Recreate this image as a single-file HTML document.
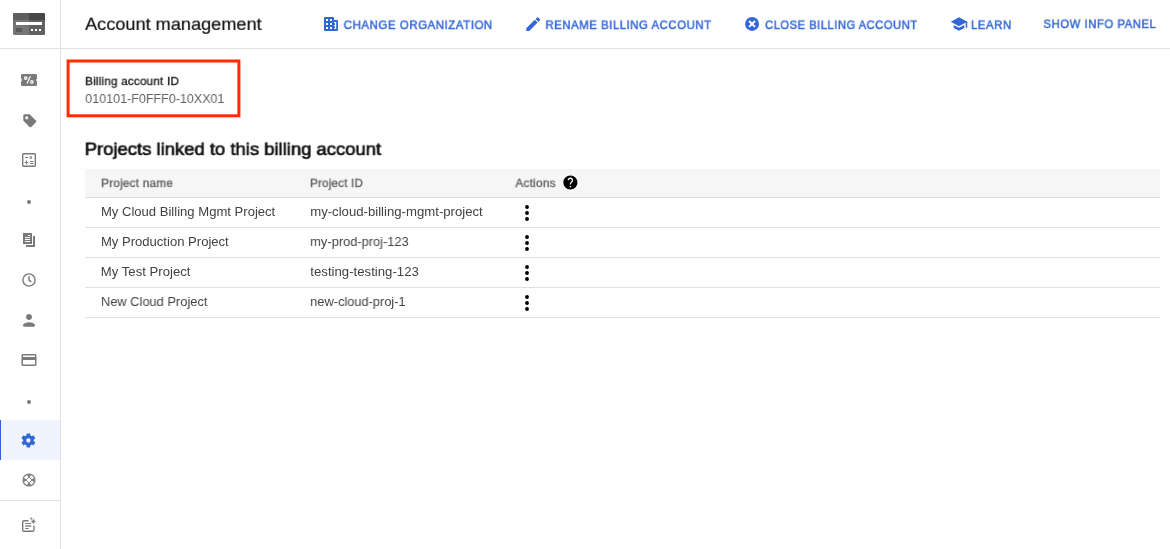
<!DOCTYPE html>
<html>
<head>
<meta charset="utf-8">
<title>Account management</title>
<style>
html,body{margin:0;padding:0;background:#fff;}
body{width:1170px;height:549px;position:relative;overflow:hidden;font-family:"Liberation Sans",sans-serif;}
.abs{position:absolute;}
.t{position:absolute;white-space:nowrap;line-height:1;transform-origin:0 0;will-change:transform;}
.blue{color:#3367d6;}
svg{position:absolute;overflow:visible;}
.hl{position:absolute;height:1px;background:#e0e0e0;}
</style>
</head>
<body>
<!-- sidebar -->
<div class="abs" style="left:60px;top:0;width:1px;height:549px;background:#e0e0e0;"></div>
<div class="hl" style="left:0;top:48px;width:1170px;"></div>
<div class="hl" style="left:0;top:500px;width:60px;"></div>
<div class="abs" style="left:0;top:420px;width:60px;height:40px;background:#f0f4fe;"></div>
<div class="abs" style="left:0;top:420px;width:1px;height:40px;background:#2f60d8;"></div>

<!-- billing logo -->
<svg id="ic-logo" style="left:13px;top:13px;" width="32" height="22" viewBox="0 0 32 22">
  <rect x="0" y="0" width="32" height="22" rx="1.500" fill="#757575"/>
  <path d="M16 0H30.500A1.500 1.500 0 0 1 32 1.500V20.500A1.500 1.500 0 0 1 30.500 22H16Z" fill="#616161"/>
  <path d="M0 7V1.500A1.500 1.500 0 0 1 1.500 0H16V7Z" fill="#5e5e5e"/>
  <path d="M16 0H30.500A1.500 1.500 0 0 1 32 1.500V7H16Z" fill="#474747"/>
  <rect x="3" y="9" width="26" height="3" fill="#fff"/>
  <rect x="3" y="15" width="6" height="4" fill="#5a5a5a"/>
  <rect x="18" y="16" width="2" height="2" fill="#fff"/>
  <rect x="22" y="16" width="2" height="2" fill="#fff"/>
  <rect x="26" y="16" width="2" height="2" fill="#fff"/>
</svg>

<!-- SIDEBAR ICONS -->
<svg id="ic-ticket" style="left:21px;top:74px;" width="16" height="12" viewBox="0 0 16 12">
  <path d="M1.200 0H14.800A1.200 1.200 0 0 1 16 1.200V5A1 1 0 0 0 16 7V10.800A1.200 1.200 0 0 1 14.800 12H1.200A1.200 1.200 0 0 1 0 10.800V7A1 1 0 0 0 0 5V1.200A1.200 1.200 0 0 1 1.200 0Z" fill="#7a7a7a"/>
  <circle cx="4.750" cy="4.100" r="1.250" fill="none" stroke="#fff" stroke-width="1.200"/>
  <circle cx="10.850" cy="7.950" r="1.250" fill="none" stroke="#fff" stroke-width="1.200"/>
  <path d="M9.350 2.300L6.050 9.500" stroke="#fff" stroke-width="1.200" fill="none"/>
</svg>
<svg id="ic-tag" style="left:21.700px;top:112.500px;" width="15.600" height="15.600" viewBox="0 0 24 24">
  <path fill="#7a7a7a" d="M21.410 11.580l-9-9C12.050 2.220 11.550 2 11 2H4c-1.100 0-2 .9-2 2v7c0 .550.220 1.050.590 1.420l9 9c.360.360.860.580 1.410.580.550 0 1.050-.220 1.410-.590l7-7c.370-.360.590-.860.590-1.410 0-.550-.230-1.060-.590-1.420zM7.300 9.900C5.970 9.900 4.900 8.830 4.900 7.500S5.970 5.100 7.300 5.100 9.700 6.170 9.700 7.500 8.630 9.900 7.300 9.900z"/>
</svg>
<svg id="ic-calc" style="left:22px;top:153px;" width="14" height="14" viewBox="0 0 14 14">
  <rect x="0.700" y="0.700" width="12.600" height="12.600" rx="0.700" fill="none" stroke="#7a7a7a" stroke-width="1.400"/>
  <path d="M3 4.500H6M7.700 3.400L9.900 5.600M9.900 3.400L7.700 5.600M2.600 9.500H6.400M4.500 7.600V11.400M8 8.500H11.200M8 10.500H11.200" stroke="#7a7a7a" stroke-width="1.050" fill="none"/>
</svg>
<svg id="ic-dot1" style="left:27px;top:200px;" width="4" height="4" viewBox="0 0 4 4"><circle cx="2" cy="2" r="2" fill="#7a7a7a"/></svg>
<svg id="ic-docs" style="left:23px;top:233px;" width="12" height="14" viewBox="0 0 12 14">
  <rect x="0" y="0" width="9" height="11" fill="#7a7a7a"/>
  <path d="M10 3H12V14H3V12H10Z" fill="#7a7a7a"/>
  <rect x="5" y="2" width="2" height="1" fill="#fff"/>
  <rect x="2" y="4" width="5" height="1" fill="#fff"/>
  <rect x="2" y="6" width="5" height="1" fill="#fff"/>
  <rect x="2" y="8" width="5" height="1" fill="#fff"/>
</svg>
<svg id="ic-clock" style="left:21px;top:272px;" width="16" height="16" viewBox="0 0 16 16">
  <circle cx="8" cy="8" r="6.100" fill="none" stroke="#7a7a7a" stroke-width="1.400"/>
  <path d="M8 4.300V8.100L10.300 9.900" fill="none" stroke="#7a7a7a" stroke-width="1.500"/>
</svg>
<svg id="ic-person" style="left:20px;top:311px;" width="18" height="18" viewBox="0 0 24 24">
  <path fill="#7a7a7a" d="M12 12c2.210 0 4-1.790 4-4s-1.790-4-4-4-4 1.790-4 4 1.790 4 4 4z"/>
  <path fill="#7a7a7a" transform="translate(0 1)" d="M12 14c-2.670 0-8 1.340-8 4v0.400c0 .880.720 1.600 1.600 1.600h12.800c.880 0 1.600-.720 1.600-1.600V18c0-2.660-5.330-4-8-4z"/>
</svg>
<svg id="ic-card" style="left:20px;top:351px;" width="18" height="18" viewBox="0 0 24 24">
  <path fill="#7a7a7a" d="M20 4H4c-1.110 0-1.990.89-1.990 2L2 18c0 1.110.89 2 2 2h16c1.110 0 2-.89 2-2V6c0-1.110-.89-2-2-2zm0 14H4v-6h16v6zm0-10H4V6h16v2z"/>
</svg>
<svg id="ic-dot2" style="left:27px;top:400px;" width="4" height="4" viewBox="0 0 4 4"><circle cx="2" cy="2" r="2" fill="#7a7a7a"/></svg>
<svg id="ic-gear" style="left:20.200px;top:431.500px;" width="16.800" height="16.800" viewBox="0 0 24 24">
  <path fill="#3367d6" d="M19.430 12.980c.04-.32.070-.64.070-.98s-.03-.66-.07-.98l2.110-1.650c.19-.15.24-.42.120-.64l-2-3.460c-.12-.22-.39-.3-.61-.22l-2.490 1c-.52-.4-1.080-.73-1.690-.98l-.38-2.650C14.460 2.180 14.250 2 14 2h-4c-.25 0-.46.180-.49.420l-.38 2.650c-.61.250-1.170.59-1.690.98l-2.490-1c-.23-.09-.49 0-.61.220l-2 3.460c-.13.220-.07.490.12.640l2.110 1.650c-.04.320-.07.650-.07.980s.03.660.07.980l-2.110 1.650c-.19.150-.24.420-.12.640l2 3.460c.12.220.39.300.61.220l2.490-1c.52.400 1.080.730 1.690.980l.38 2.650c.03.240.24.420.49.420h4c.25 0 .46-.18.490-.42l.38-2.650c.61-.25 1.170-.59 1.690-.98l2.490 1c.23.090.49 0 .61-.22l2-3.460c.12-.22.070-.49-.12-.64l-2.110-1.650zM12 15c-1.660 0-3-1.340-3-3s1.340-3 3-3 3 1.340 3 3-1.340 3-3 3z"/>
</svg>
<svg id="ic-ring" style="left:22px;top:473px;" width="14" height="14" viewBox="-7 -7 14 14">
  <circle cx="0" cy="0" r="6" fill="none" stroke="#7a7a7a" stroke-width="1.100"/>
  <path d="M0 -3L3 0L0 3L-3 0Z" fill="none" stroke="#7a7a7a" stroke-width="0.900"/>
  <path d="M-0.500 -2.700H0.500L2.500 -5.800H-2.500Z M-0.500 2.700H0.500L2.500 5.800H-2.500Z M-2.700 -0.500V0.500L-5.800 2.500V-2.500Z M2.700 -0.500V0.500L5.800 2.500V-2.500Z" fill="#7a7a7a"/>
</svg>
<svg id="ic-note" style="left:21px;top:516px;" width="16" height="18" viewBox="0 0 16 18">
  <path d="M7.500 4.700H3A1.300 1.300 0 0 0 1.700 6V14A1.300 1.300 0 0 0 3 15.300H11.600A1.300 1.300 0 0 0 12.900 14V9.500" fill="none" stroke="#7a7a7a" stroke-width="1.400"/>
  <path d="M4.200 7.500H10.200M4.200 12.500H7.700" stroke="#7a7a7a" stroke-width="1.050" fill="none"/><path d="M4.200 10H10.200" stroke="#7a7a7a" stroke-width="1.350" fill="none"/>
  <path d="M12.400 2.800L13.150 4.650L15 5.400L13.150 6.150L12.400 8L11.650 6.150L9.800 5.400L11.650 4.650Z" fill="#7a7a7a" stroke="#7a7a7a" stroke-width="0.300"/>
  <path d="M10.200 1.200L10.600 2.200L11.600 2.600L10.600 3L10.200 4L9.800 3L8.800 2.600L9.800 2.200Z" fill="#7a7a7a" stroke="#7a7a7a" stroke-width="0.200"/>
</svg>
<!-- /SIDEBAR ICONS -->
<!-- red highlight box -->
<svg id="redbox" style="left:0;top:0;" width="300" height="130" viewBox="0 0 300 130"><rect x="68.100" y="61" width="170.800" height="54.800" fill="none" stroke="#ff2d00" stroke-width="3"/></svg>
<!-- table -->
<div class="abs" style="left:85px;top:169px;width:1075px;height:28px;background:#f6f6f6;"></div>
<div class="hl" style="left:85px;top:197px;width:1075px;"></div>
<div class="hl" style="left:85px;top:227px;width:1075px;"></div>
<div class="hl" style="left:85px;top:257px;width:1075px;"></div>
<div class="hl" style="left:85px;top:287px;width:1075px;"></div>
<div class="hl" style="left:85px;top:317px;width:1075px;"></div>
<!-- TOOLBAR ICONS -->
<svg id="ic-domain" style="left:324px;top:17px;" width="14" height="14" viewBox="0 0 14 14">
  <path d="M1 0H9A1 1 0 0 1 10 1V3H13A1 1 0 0 1 14 4V13A1 1 0 0 1 13 14H1A1 1 0 0 1 0 13V1A1 1 0 0 1 1 0Z" fill="#3367d6"/>
  <rect x="2" y="2" width="2" height="2" fill="#fff"/><rect x="6" y="2" width="2" height="2" fill="#fff"/>
  <rect x="2" y="6" width="2" height="2" fill="#fff"/><rect x="6" y="6" width="2" height="2" fill="#fff"/>
  <rect x="2" y="10" width="2" height="2" fill="#fff"/><rect x="6" y="10" width="2" height="2" fill="#fff"/>
  <path d="M10 5H12.200V12H10V11.200H11V9.200H10V8H11V6H10Z" fill="#fff"/>
</svg>
<svg id="ic-edit" style="left:523.600px;top:14.800px;" width="18.400" height="18.400" viewBox="0 0 24 24">
  <path fill="#3367d6" d="M3 17.250V21h3.750L17.810 9.940l-3.750-3.750L3 17.250zM20.710 7.040c.39-.39.39-1.020 0-1.410l-2.340-2.340c-.39-.39-1.020-.39-1.410 0l-1.830 1.830 3.750 3.750 1.830-1.830z"/>
</svg>
<svg id="ic-cancel" style="left:744px;top:16px;" width="16" height="16" viewBox="-8 -8 16 16">
  <circle cx="0.050" cy="-0.100" r="7" fill="#3367d6"/>
  <path d="M-2.900 -3.050L3 2.850M3 -3.050L-2.900 2.850" stroke="#fff" stroke-width="2" fill="none"/>
</svg>
<svg id="ic-school" style="left:949.950px;top:14.900px;" width="18" height="18" viewBox="0 0 24 24">
  <path fill="#3367d6" d="M5 13.180v4L12 21l7-3.820v-4L12 17l-7-3.820zM12 3L1 9l11 6 9-4.910V17h2V9L12 3z"/>
</svg>
<!-- help icon -->
<svg id="ic-help" style="left:562.100px;top:173.950px;" width="16.800" height="16.800" viewBox="0 0 24 24">
  <path fill="#000" d="M12 2C6.480 2 2 6.480 2 12s4.480 10 10 10 10-4.480 10-10S17.520 2 12 2zm1 17h-2v-2h2v2zm2.070-7.750l-.9.920C13.450 12.900 13 13.500 13 15h-2v-.5c0-1.100.45-2.100 1.170-2.830l1.240-1.260c.37-.36.590-.86.590-1.410 0-1.100-.9-2-2-2s-2 .9-2 2H8c0-2.210 1.790-4 4-4s4 1.790 4 4c0 .88-.36 1.680-.93 2.250z"/>
</svg>
<!-- more_vert -->
<svg id="ic-more1" style="left:525px;top:205px;" width="4" height="16" viewBox="0 0 4 16"><circle cx="2" cy="2" r="1.950" fill="#000"/><circle cx="2" cy="8" r="1.950" fill="#000"/><circle cx="2" cy="14" r="1.950" fill="#000"/></svg>
<svg id="ic-more2" style="left:525px;top:235px;" width="4" height="16" viewBox="0 0 4 16"><circle cx="2" cy="2" r="1.950" fill="#000"/><circle cx="2" cy="8" r="1.950" fill="#000"/><circle cx="2" cy="14" r="1.950" fill="#000"/></svg>
<svg id="ic-more3" style="left:525px;top:265px;" width="4" height="16" viewBox="0 0 4 16"><circle cx="2" cy="2" r="1.950" fill="#000"/><circle cx="2" cy="8" r="1.950" fill="#000"/><circle cx="2" cy="14" r="1.950" fill="#000"/></svg>
<svg id="ic-more4" style="left:525px;top:295px;" width="4" height="16" viewBox="0 0 4 16"><circle cx="2" cy="2" r="1.950" fill="#000"/><circle cx="2" cy="8" r="1.950" fill="#000"/><circle cx="2" cy="14" r="1.950" fill="#000"/></svg>
<!-- /TOOLBAR ICONS -->
<!-- TEXT -->
<div class="t" style="left:85px;top:15px;font-size:18px;font-weight:400;color:#111;transform-origin:0 15.24px;transform:translate(0.10px,0) scale(1.0082,0.95);-webkit-text-stroke:0.2px #111;">Account management</div>
<div class="t" style="left:343px;top:18px;font-size:13px;font-weight:400;color:#3367d6;transform-origin:0 11.00px;transform:translate(0.66px,0) scale(0.8843,0.94);-webkit-text-stroke:0.5px #3367d6;letter-spacing:0.6px;">CHANGE ORGANIZATION</div>
<div class="t" style="left:545px;top:18px;font-size:13px;font-weight:400;color:#3367d6;transform-origin:0 11.00px;transform:translate(0.41px,0) scale(0.8766,0.94);-webkit-text-stroke:0.5px #3367d6;letter-spacing:0.6px;">RENAME BILLING ACCOUNT</div>
<div class="t" style="left:765px;top:18px;font-size:13px;font-weight:400;color:#3367d6;transform-origin:0 11.00px;transform:translate(0.08px,0) scale(0.8602,0.94);-webkit-text-stroke:0.5px #3367d6;letter-spacing:0.6px;">CLOSE BILLING ACCOUNT</div>
<div class="t" style="left:970px;top:18px;font-size:13px;font-weight:400;color:#3367d6;transform-origin:0 11.00px;transform:translate(0.90px,0) scale(0.8839,0.94);-webkit-text-stroke:0.5px #3367d6;letter-spacing:0.6px;">LEARN</div>
<div class="t" style="left:1043px;top:17px;font-size:13px;font-weight:400;color:#3367d6;transform-origin:0 11.00px;transform:translate(0.45px,0) scale(0.8731,0.94);-webkit-text-stroke:0.5px #3367d6;letter-spacing:0.6px;">SHOW INFO PANEL</div>
<div class="t" style="left:85px;top:75px;font-size:12px;font-weight:400;color:#212121;transform-origin:0 10.16px;transform:translate(0.07px,0) scale(0.9757,0.9);-webkit-text-stroke:0.35px #212121;letter-spacing:0.2px;">Billing account ID</div>
<div class="t" style="left:85px;top:92px;font-size:13px;font-weight:400;color:#616161;transform:translate(0.21px,0) scale(0.9632,1);">010101-F0FFF0-10XX01</div>
<div class="t" style="left:84px;top:140px;font-size:18px;font-weight:400;color:#111;transform-origin:0 15.24px;transform:translate(0.66px,0) scale(1.0253,0.955);-webkit-text-stroke:0.7px #111;">Projects linked to this billing account</div>
<div class="t" style="left:101px;top:177px;font-size:12px;font-weight:400;color:#666;transform-origin:0 10.16px;transform:translate(0.07px,0) scale(0.9767,0.92);-webkit-text-stroke:0.4px #666;letter-spacing:0.25px;">Project name</div>
<div class="t" style="left:309px;top:177px;font-size:12px;font-weight:400;color:#666;transform-origin:0 10.16px;transform:translate(0.99px,0) scale(0.9623,0.92);-webkit-text-stroke:0.4px #666;letter-spacing:0.25px;">Project ID</div>
<div class="t" style="left:515px;top:177px;font-size:12px;font-weight:400;color:#666;transform-origin:0 10.16px;transform:translate(0.40px,0) scale(0.9839,0.92);-webkit-text-stroke:0.4px #666;letter-spacing:0.25px;">Actions</div>
<div class="t" style="left:100px;top:205px;font-size:13px;font-weight:400;color:#424242;transform:translate(0.88px,0) scale(1.0057,1);">My Cloud Billing Mgmt Project</div>
<div class="t" style="left:100px;top:235px;font-size:13px;font-weight:400;color:#424242;transform:translate(0.88px,0) scale(1.0056,1);">My Production Project</div>
<div class="t" style="left:100px;top:265px;font-size:13px;font-weight:400;color:#424242;transform:translate(0.87px,0) scale(1.0104,1);">My Test Project</div>
<div class="t" style="left:100px;top:295px;font-size:13px;font-weight:400;color:#424242;transform:translate(0.89px,0) scale(0.9898,1);">New Cloud Project</div>
<div class="t" style="left:310px;top:205px;font-size:13px;font-weight:400;color:#424242;transform:translate(0.18px,0) scale(1.0123,1);">my-cloud-billing-mgmt-project</div>
<div class="t" style="left:310px;top:235px;font-size:13px;font-weight:400;color:#424242;transform:translate(0.20px,0) scale(0.9882,1);">my-prod-proj-123</div>
<div class="t" style="left:310px;top:265px;font-size:13px;font-weight:400;color:#424242;transform:translate(0.30px,0) scale(1.0148,1);">testing-testing-123</div>
<div class="t" style="left:310px;top:295px;font-size:13px;font-weight:400;color:#424242;transform:translate(0.20px,0) scale(0.9855,1);">new-cloud-proj-1</div>
<!-- /TEXT -->

</body>
</html>
